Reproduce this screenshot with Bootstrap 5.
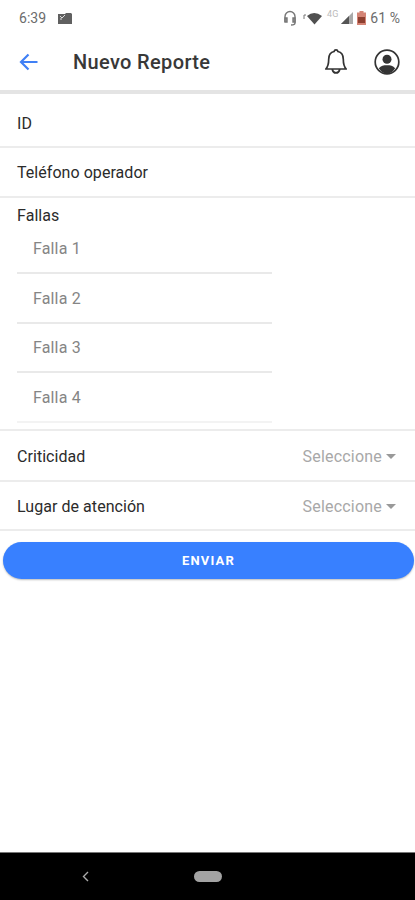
<!DOCTYPE html>
<html lang="es">
<head>
<meta charset="utf-8">
<meta name="viewport" content="width=device-width, initial-scale=1">
<title>Nuevo Reporte</title>
<link href="https://cdn.jsdelivr.net/npm/bootstrap@5.3.0/dist/css/bootstrap.min.css" rel="stylesheet">
<style>
body{font-family:Roboto,"Liberation Sans",sans-serif;font-size:16px;line-height:20px;color:#2b2b2b;background:#fff;letter-spacing:.05px}
.screen{height:900px;overflow:hidden}
.status-bar{height:35px;padding:1px 15px 0 19px;font-size:14px;color:#6c6c6c}
.status-bar .notice{margin-left:12px}
.signals{height:20px}
.wifi{margin-left:6px}
.network{font-size:9px;color:#bbb;line-height:10px;margin:-8px 3px 0 5px}
.battery{margin:0 4px}
.app-header{height:59px;padding:0 15px 2px 19px;border-bottom:4px solid #e4e4e4}
.app-title{font-size:20px;font-weight:500;line-height:24px;color:#383838;letter-spacing:.35px;margin-left:35px}
.profile{margin-left:26px}
.field-row{height:50px;padding:2px 17px 0;border-bottom:2px solid #ececec}
.field-row.first-row{height:54px;padding-top:7px}
.field-row.tall-row{height:51px}
.field-row.last-row{height:49px}
.faults{height:233px;padding:8px 17px 0;border-bottom:2px solid #ececec}
.fault-list{width:255px}
.fault-row{height:49.5px;padding:2px 16px 0;border-bottom:2px solid #e9e9e9;color:#858585;letter-spacing:.15px}
.fault-row:first-child{height:48px;padding-top:0}
.fault-row:last-child{border-bottom-color:#f3f3f3}
.choice{color:#a8a8a8;padding-right:2px;letter-spacing:.2px}
.send-wrap{padding:11px 1px 0 3px}
.btn-send{height:37px;background:#3880ff;color:#fff;font-size:13px;font-weight:700;letter-spacing:1.2px;box-shadow:0 1px 2px #0004;padding:0}
.btn-send:hover{background:#3171e0;color:#fff}
.nav-strip{height:48px;background:#000;border-top:1px solid #777}
.nav-strip .back{margin-left:82px}
.home-pill{width:28px;height:11px;background:#a3a3a3;margin-left:105px}
</style>
</head>
<body>
<div class="screen d-flex flex-column">
  <div class="status-bar d-flex align-items-center">
    <span class="clock">6:39</span>
    <svg class="me-auto notice" width="14" height="11" viewBox="0 0 14 11"><path d="M0 1h7l1-1h5l1 1v10H0z" fill="#606060"/><path d="M2 3l2 2 3-3M2 6h2" stroke="#ddd" fill="none"/></svg>
    <div class="signals d-flex align-items-center">
      <svg width="14" height="16" viewBox="0 0 14 16" fill="none" stroke="#777" stroke-width="1.4"><path d="M2 12V6.500a5 5 0 0 1 10 0V13q0 2-4 2"/><path d="M2 8h2v4H2zM10 8h2v4h-2z" fill="#999"/></svg>
      <svg class="wifi" width="19" height="13" viewBox="0 0 19 13"><path d="M4 4Q11-2 19 4L11.500 12.500z" fill="#505050"/><path d="M1 7V3h2" stroke="#777" fill="none"/></svg>
      <span class="network">4G</span>
      <svg class="bars" width="12" height="12" viewBox="0 0 12 12"><path d="M0 12L12 0v12z" fill="#aaa"/><path d="M0 12L8 4v8z" fill="#555"/></svg>
      <svg class="battery" width="9" height="14" viewBox="0 0 9 14"><path d="M2.500 0h4v1.500H9V14H0V1.500h2.500z" fill="#d48475"/><path d="M1 6h7v6H1z" fill="#8e4030"/></svg>
      <span class="percent">61 %</span>
    </div>
  </div>
  <header class="app-header d-flex align-items-center">
    <svg width="19" height="18" viewBox="0 0 19 18" fill="none" stroke="#4080f5" stroke-width="2.2"><path d="M9.500 1.500L2 9l7.500 7.500M2 9h16.500"/></svg>
    <h1 class="app-title mb-0">Nuevo Reporte</h1>
    <svg class="ms-auto" width="24" height="28" viewBox="0 0 24 28" fill="none" stroke="#333" stroke-width="1.700" stroke-linejoin="round"><path d="M12 1.800c-1.200 0-1.700.6-1.900 1.700C6.200 4.300 4.700 7.700 4.700 11.200c0 5.500-.8 7.500-2.900 9.800h20.400c-2.100-2.300-2.900-4.300-2.900-9.800 0-3.500-1.500-6.900-5.400-7.700-.2-1.100-.7-1.700-1.900-1.700zM8.300 21.500a3.800 4.500 0 0 0 7.400 0"/></svg>
    <svg class="profile" width="26" height="26" viewBox="0 0 26 26"><circle cx="13" cy="13" r="11.800" fill="none" stroke="#333" stroke-width="1.700"/><circle cx="13" cy="10.300" r="4.500" fill="#333"/><path d="M4.800 19.300C7 16.700 9.500 16.200 13 16.200s6 .5 8.200 3.100Q18 24.500 13 24.500T4.800 19.300z" fill="#333"/></svg>
  </header>
  <main class="flex-grow-1">
    <div class="field-row first-row d-flex align-items-center">ID</div>
    <div class="field-row d-flex align-items-center">Teléfono operador</div>
    <section class="faults">
      <div>Fallas</div>
      <div class="fault-list">
        <div class="fault-row d-flex align-items-center">Falla 1</div>
        <div class="fault-row d-flex align-items-center">Falla 2</div>
        <div class="fault-row d-flex align-items-center">Falla 3</div>
        <div class="fault-row d-flex align-items-center">Falla 4</div>
      </div>
    </section>
    <div class="field-row tall-row d-flex align-items-center justify-content-between"><span>Criticidad</span><span class="choice d-flex align-items-center gap-1">Seleccione <svg width="10" height="5" viewBox="0 0 10 5"><path d="M0 0h10L5 5z" fill="#999"/></svg></span></div>
    <div class="field-row last-row d-flex align-items-center justify-content-between"><span>Lugar de atención</span><span class="choice d-flex align-items-center gap-1">Seleccione <svg width="10" height="5" viewBox="0 0 10 5"><path d="M0 0h10L5 5z" fill="#999"/></svg></span></div>
    <div class="send-wrap"><button type="button" class="btn btn-send w-100 rounded-pill border-0 d-block">ENVIAR</button></div>
  </main>
  <nav class="nav-strip d-flex align-items-center">
    <svg class="back" width="7" height="11" viewBox="0 0 7 11"><path d="M6 1L1.500 5.500 6 10" fill="none" stroke="#aaa" stroke-width="1.400"/></svg>
    <span class="home-pill rounded-pill"></span>
  </nav>
</div>
<script src="https://cdn.jsdelivr.net/npm/bootstrap@5.3.0/dist/js/bootstrap.bundle.min.js"></script>
</body>
</html>
